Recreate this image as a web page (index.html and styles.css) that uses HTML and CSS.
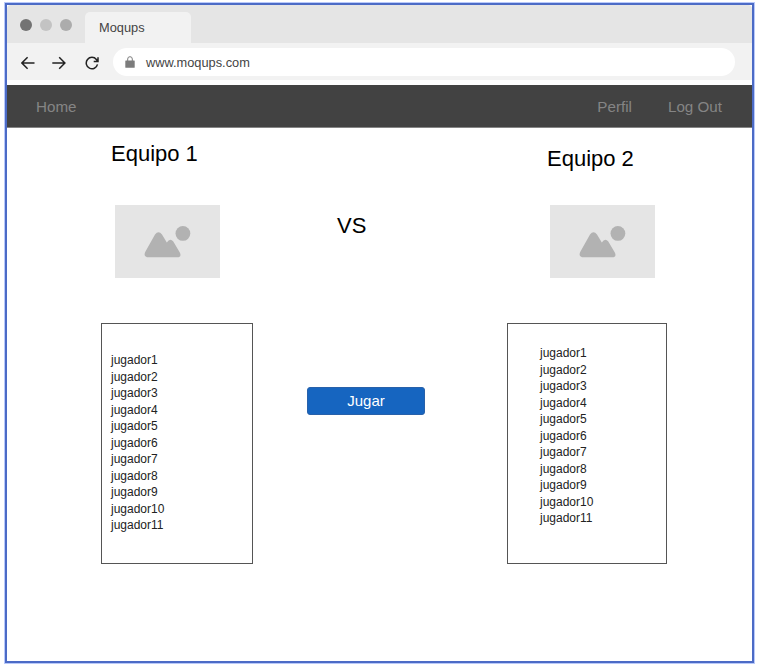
FILE: index.html
```html
<!DOCTYPE html>
<html lang="es">
<head>
<meta charset="utf-8">
<title>Moqups</title>
<link rel="stylesheet" href="styles.css">
</head>
<body>
<div class="window">
  <div class="tabs">
    <div class="dots"><span class="dot dark"></span><span class="dot light"></span><span class="dot mid"></span></div>
    <div class="tab">Moqups</div>
  </div>
  <div class="toolbar">
    <svg class="arrow" viewBox="0 0 14 14"><path d="M13.500 7H1.200M6.600 1.200L.9 7L6.600 12.800"/></svg>
    <svg class="arrow" viewBox="0 0 14 14"><path d="M.3 7H12.600M7.200 1.200L12.900 7L7.200 12.800"/></svg>
    <svg class="arrow reload" viewBox="0 0 14 14"><path d="M12.500 8.400A5.700 5.700 0 1 1 11.400 3.500L12.500 5M13 1.200V5.500H8.700"/></svg>
    <div class="address">
      <svg class="lock" viewBox="0 0 10 12"><path class="shackle" d="M2.700 5V3a2.300 2.300 0 0 1 4.600 0v2"/><rect x=".3" y="4.400" width="9.400" height="7.400" rx=".5"/></svg>
      <span>www.moqups.com</span>
    </div>
  </div>
  <nav class="nav"><a class="home">Home</a><a>Perfil</a><a>Log Out</a></nav>
  <main class="match">
    <section class="team first">
      <h2>Equipo 1</h2>
      <svg class="photo" viewBox="0 0 105 73"><path d="M40 29.500Q43.500 25 47 29.500L51.800 37.500Q55 32.700 58.300 36.500L64.800 47.500Q67 52.200 62 52.300H34Q28 52.200 30.200 47Z"/><circle cx="67.900" cy="28.400" r="7.400"/></svg>
      <ul class="players"><li>jugador1</li><li>jugador2</li><li>jugador3</li><li>jugador4</li><li>jugador5</li><li>jugador6</li><li>jugador7</li><li>jugador8</li><li>jugador9</li><li>jugador10</li><li>jugador11</li></ul>
    </section>
    <section class="center">
      <h2>VS</h2>
      <button>Jugar</button>
    </section>
    <section class="team second">
      <h2>Equipo 2</h2>
      <svg class="photo" viewBox="0 0 105 73"><path d="M40 29.500Q43.500 25 47 29.500L51.800 37.500Q55 32.700 58.300 36.500L64.800 47.500Q67 52.200 62 52.300H34Q28 52.200 30.200 47Z"/><circle cx="67.900" cy="28.400" r="7.400"/></svg>
      <ul class="players"><li>jugador1</li><li>jugador2</li><li>jugador3</li><li>jugador4</li><li>jugador5</li><li>jugador6</li><li>jugador7</li><li>jugador8</li><li>jugador9</li><li>jugador10</li><li>jugador11</li></ul>
    </section>
  </main>
</div>
</body>
</html>
```
FILE: styles.css
```css
* { box-sizing: border-box; }
body {
  margin: 0;
  padding: 3px 0 0 5px;
  height: 665px;
  overflow: hidden;
  background: #fff;
  font-family: "Liberation Sans", Arial, sans-serif;
}
.window {
  width: 749px;
  height: 660px;
  border: 2px solid #4c6bc6;
  box-shadow: 0 0 0 1px #b9c9fa;
}
.tabs {
  display: flex;
  height: 38px;
  padding: 7px 0 0 13px;
  background: #e5e5e5;
  border-radius: 4px 4px 0 0;
}
.dots { display: flex; gap: 8px; width: 65px; padding-top: 6.5px; }
.dot { width: 12px; height: 12px; border-radius: 50%; }
.dark { background: #737373; }
.light { background: #c3c3c3; }
.mid { background: #acacac; }
.tab {
  width: 106px;
  padding-left: 14px;
  font-size: 12.8px;
  line-height: 31px;
  color: #444;
  background: #f2f2f2;
  border-radius: 5px 5px 0 0;
}
.toolbar {
  display: flex;
  align-items: center;
  gap: 17px;
  height: 37px;
  padding: 1px 17px 0 14px;
  margin-bottom: 5px;
  background: #f2f2f2;
}
.arrow {
  flex: none;
  width: 14px;
  height: 14px;
  margin-top: 1px;
  fill: none;
  stroke: #222;
  stroke-width: 1.5;
}
.reload { margin-left: 2px; }
.address {
  display: flex;
  align-items: center;
  flex: 1;
  height: 28px;
  margin-left: -3px;
  padding-left: 12px;
  gap: 11px;
  border-radius: 14px;
  background: #fff;
  font-size: 12.8px;
  color: #444;
}
.lock { width: 10px; height: 12px; fill: #7c7c7c; }
.shackle { fill: none; stroke: #7c7c7c; stroke-width: 1; }
.nav {
  display: flex;
  gap: 36px;
  height: 43px;
  padding: 0 30px 0 29px;
  background: #424242;
  border-bottom: 1px solid #858585;
  font-size: 15.2px;
  line-height: 43px;
  color: #858585;
}
.home { margin-right: auto; }
.match { display: flex; }
h2 { margin: 0; font-size: 22px; font-weight: 400; line-height: 26px; color: #000; }
.team { display: flex; flex-direction: column; }
.first { width: 152px; margin-left: 94px; padding-top: 13px; }
.first h2 { padding-left: 10px; margin-bottom: 38px; }
.second { width: 160px; margin-left: 82px; padding-top: 18px; }
.second h2 { padding-left: 40px; margin-bottom: 33px; }
.photo {
  width: 105px;
  height: 73px;
  margin: 0 0 45px 14px;
  background: #e5e5e5;
  fill: #b2b2b2;
}
.second .photo { margin-left: 43px; }
.players {
  height: 241px;
  margin: 0;
  padding: 28px 0 0 9px;
  border: 1px solid #555;
  list-style: none;
  font-size: 12px;
  line-height: 16.5px;
  color: #222;
}
.second .players { padding: 21px 0 0 32px; }
.center { width: 118px; margin-left: 54px; padding-top: 85px; }
.center h2 { padding-left: 30px; }
button {
  display: block;
  width: 118px;
  height: 28px;
  margin-top: 148px;
  padding: 0;
  border: 1px solid #2861aa;
  border-radius: 3px;
  background: #1665c0;
  color: #fff;
  font: 15px/26px "Liberation Sans", Arial, sans-serif;
}
```
